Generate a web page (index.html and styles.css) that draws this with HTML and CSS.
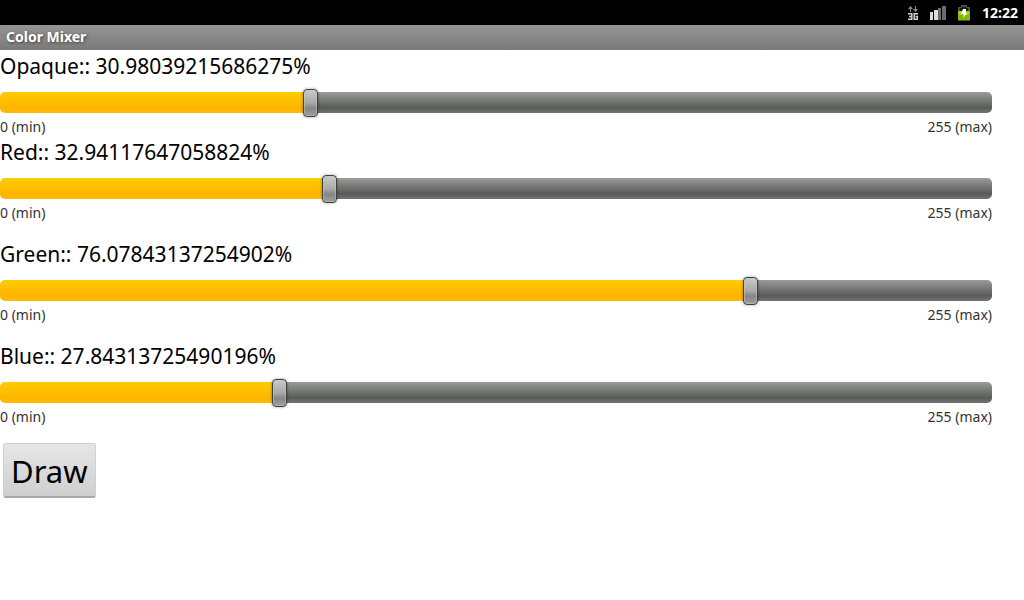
FILE: index.html
```html
<!DOCTYPE html>
<html lang="en">
<head>
<meta charset="utf-8">
<meta name="viewport" content="width=device-width, initial-scale=1">
<title>Color Mixer</title>
<link rel="stylesheet" href="styles.css">
</head>
<body>
<div class="status-bar">
  <svg class="status-icon" width="10" height="14" viewBox="0 0 10 14" aria-label="3G data">
    <path fill="#8c8c8c" d="M2.500 0 0 3h2v3h1V3h2zM7 0h1v3h2L7.500 6 5 3h2z"/>
    <path fill="none" stroke="#d0d0d0" stroke-width="1.500" d="M0 7.700h3.800v5.500H0M1 10.500h3M10 7.700H6.200v5.500h3.100v-2.700H7.500"/>
  </svg>
  <svg class="status-icon" width="16" height="14" viewBox="0 0 16 14" aria-label="Signal strength">
    <path fill="#dcdcdc" d="M0 6h3v8H0zM4 4h4v10H4z"/>
    <path fill="#6b6b6b" d="M8 2h3v12H8zM12 0h4v14h-4z"/>
  </svg>
  <svg class="status-icon" width="12" height="16" viewBox="0 0 12 16" aria-label="Battery charging">
    <path fill="#484c43" d="M3 0h6v2h3v14H0V2h3z"/>
    <path fill="#171a12" d="M4 2h4v1h2v4H2V3h2z"/>
    <path fill="#82b800" d="M0 6h12v9H0z"/>
    <path fill="#a2d51c" d="M1 6h10v4H1z"/>
    <path fill="#fff" d="M5 4h3v4h1l-4 5 1-4H3z"/>
  </svg>
  <time class="clock">12:22</time>
</div>
<header class="title-bar"><h1 class="title">Color Mixer</h1></header>
<main class="mixer">
  <section class="channel">
    <label class="name" for="opaque">Opaque:: 30.98039215686275%</label>
    <input class="slider" id="opaque" type="range" min="0" max="255" value="79" style="--level:0.3098">
    <div class="scale"><span>0 (min)</span><span>255 (max)</span></div>
  </section>
  <section class="channel spaced">
    <label class="name" for="red">Red:: 32.94117647058824%</label>
    <input class="slider" id="red" type="range" min="0" max="255" value="84" style="--level:0.3294">
    <div class="scale"><span>0 (min)</span><span>255 (max)</span></div>
  </section>
  <section class="channel spaced">
    <label class="name" for="green">Green:: 76.07843137254902%</label>
    <input class="slider" id="green" type="range" min="0" max="255" value="194" style="--level:0.7608">
    <div class="scale"><span>0 (min)</span><span>255 (max)</span></div>
  </section>
  <section class="channel spaced">
    <label class="name" for="blue">Blue:: 27.84313725490196%</label>
    <input class="slider" id="blue" type="range" min="0" max="255" value="71" style="--level:0.2784">
    <div class="scale"><span>0 (min)</span><span>255 (max)</span></div>
  </section>
  <button class="draw" type="button">Draw</button>
</main>
<script src="mixer.js"></script>
</body>
</html>
```
FILE: styles.css
```css
* { box-sizing: border-box; }

body {
  margin: 0;
  background: #fff;
  color: #000;
  font-family: "Noto Sans", "Open Sans", sans-serif;
}

.status-bar {
  display: flex;
  align-items: center;
  justify-content: flex-end;
  gap: 12px;
  height: 25px;
  padding-right: 6px;
  background: #000;
}

.clock {
  color: #fff;
  font-size: 14px;
  font-weight: 700;
  line-height: 24px;
}

.title-bar {
  height: 25px;
  padding: 0 6px;
  background: linear-gradient(#959595, #7b797b);
}

.title {
  margin: 0;
  color: #fff;
  font-size: 14px;
  font-weight: 700;
  line-height: 24px;
  text-shadow: 1px 1px 3px #444;
}

.mixer { padding: 1px 32px 16px 0; }

.spaced { margin-bottom: 16px; }

.name {
  display: block;
  font-size: 21px;
  line-height: 30px;
}

.slider {
  display: block;
  width: 100%;
  height: 29px;
  margin: 7px 0 0;
  background: none;
  -webkit-appearance: none;
  appearance: none;
}

.slider::-webkit-slider-runnable-track {
  height: 21px;
  border-radius: 5px;
  background:
    linear-gradient(#ffcc00, #ffb400 75%, #ffbc00) 0 0 / calc((100% - 15px) * var(--level) + 7px) 100% no-repeat,
    linear-gradient(#9b9c9a, #595b58 75%, #727471);
}

.slider::-webkit-slider-thumb {
  width: 15px;
  height: 28px;
  margin-top: -3px;
  border: 1px solid #404040;
  border-radius: 4px;
  background: linear-gradient(#cacaca, #a8a8a8 50%, #858585 70%, #a0a0a0);
  box-shadow: inset 0 0 0 1px rgba(200, 200, 200, 0.5), 0 0 3px rgba(0, 0, 0, 0.4);
  -webkit-appearance: none;
  appearance: none;
}

.scale {
  display: flex;
  justify-content: space-between;
  color: #333;
  font-size: 14px;
  line-height: 20px;
}

.draw {
  display: block;
  margin: 0 3px;
  padding: 2px 7px 0;
  border: 1px solid #d0d0d0;
  border-bottom: 2px solid #a8a8a8;
  border-radius: 3px;
  background: linear-gradient(#e6e6e6, #cfcfcf);
  color: #000;
  font-family: inherit;
  font-size: 31px;
  line-height: 50px;
}
```
FILE: mixer.js
```js
document.querySelectorAll(".slider").forEach(function (slider) {
  slider.addEventListener("input", function () {
    var level = slider.value / slider.max;
    var label = slider.labels[0];
    slider.style.setProperty("--level", level);
    label.textContent = label.textContent.split("::")[0] + ":: " + level * 100 + "%";
  });
});
```
